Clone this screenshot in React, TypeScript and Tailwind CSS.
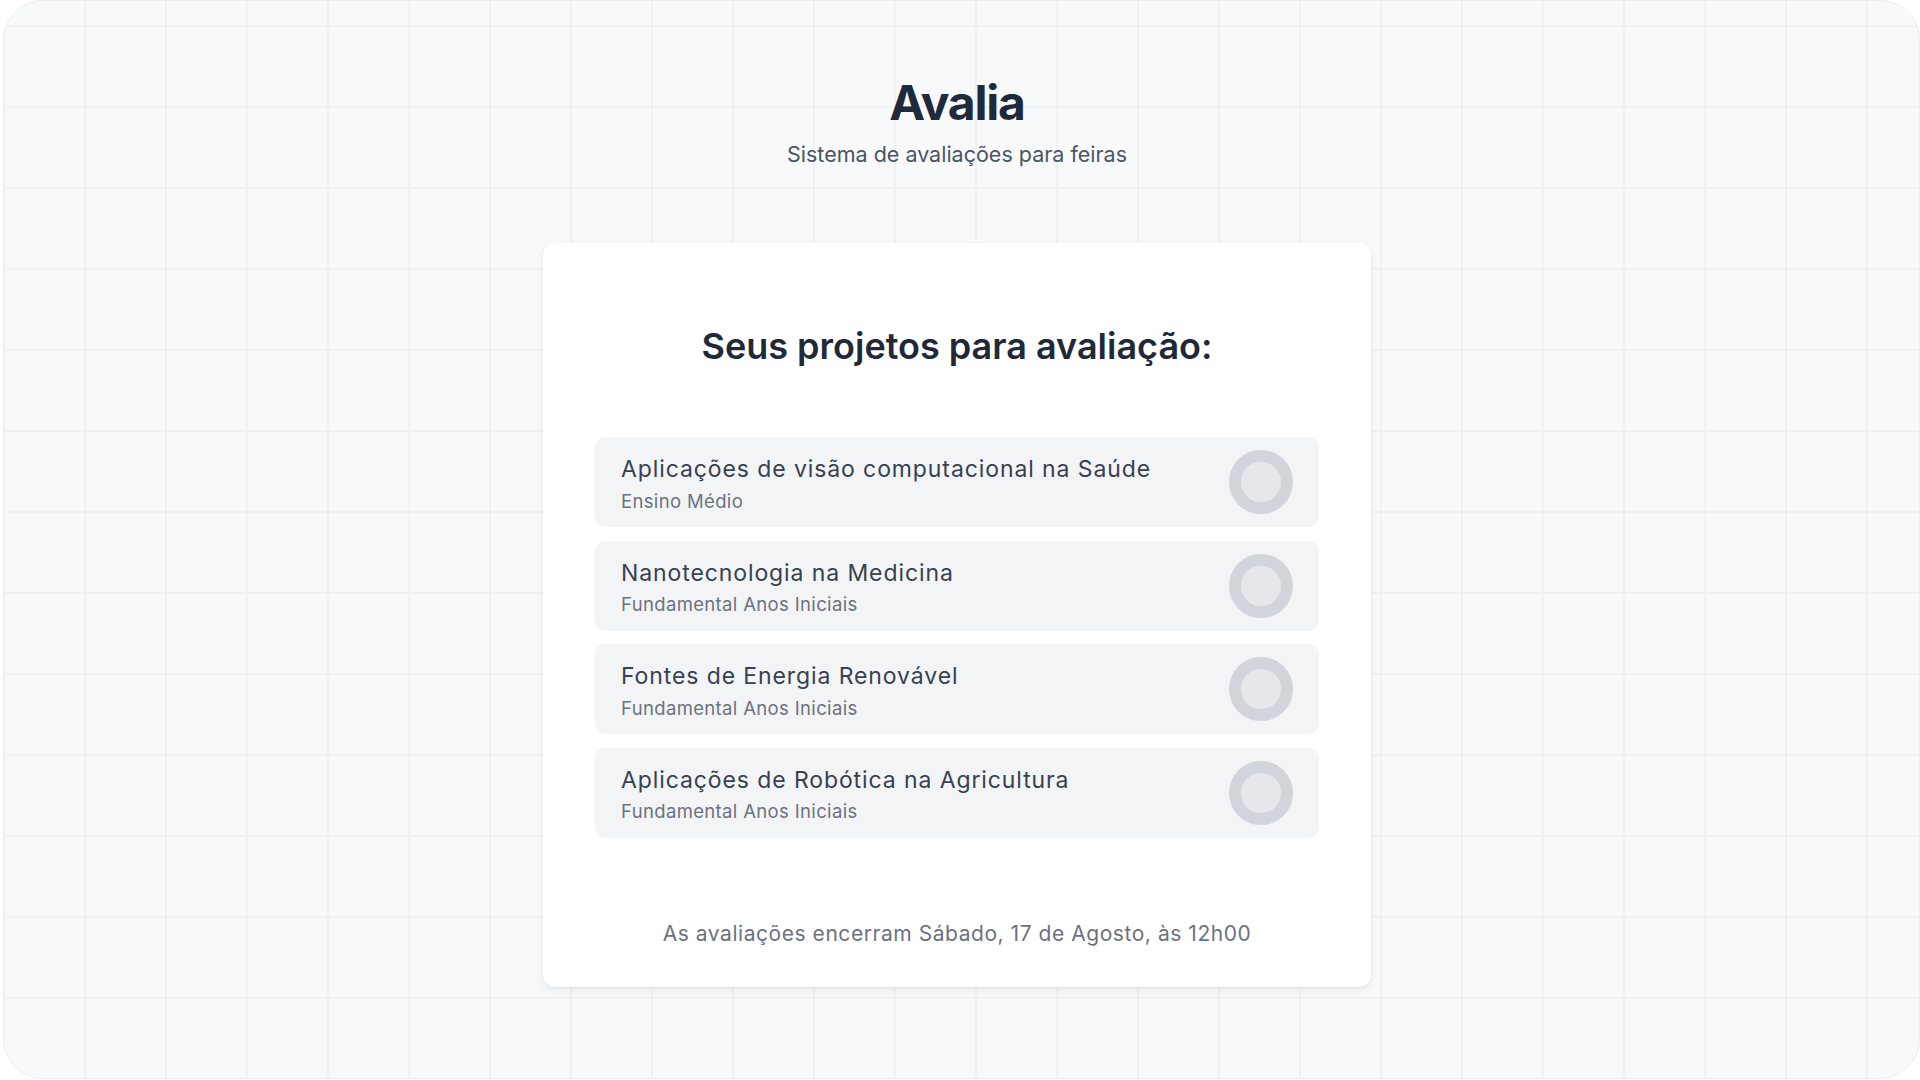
const projetos = [
  { titulo: 'Aplicações de visão computacional na Saúde', nivel: 'Ensino Médio' },
  { titulo: 'Nanotecnologia na Medicina', nivel: 'Fundamental Anos Iniciais' },
  { titulo: 'Fontes de Energia Renovável', nivel: 'Fundamental Anos Iniciais' },
  { titulo: 'Aplicações de Robótica na Agricultura', nivel: 'Fundamental Anos Iniciais' },
]

function ProjetoItem({ titulo, nivel }: { titulo: string; nivel: string }) {
  return (
    <div className="flex h-[90px] items-start justify-between rounded-[10px] bg-[#f3f4f6] pl-[26px] pr-[26px]">
      <div className="flex flex-col pt-[19px]">
        <span className="text-[23px] leading-[27px] tracking-[0.9px] text-[#374151]">{titulo}</span>
        <span className="mt-[6.5px] text-[18.5px] leading-[22px] tracking-[0.35px] text-[#6b7280]">{nivel}</span>
      </div>
      <div className="mt-[13px] h-16 w-16 rounded-full border-[12px] border-[#d1d5db] bg-[#e5e7eb]" />
    </div>
  )
}

export default function App() {
  return (
    <div className="h-[1080px] w-full bg-white font-['Inter',sans-serif]">
      <div className="ml-[3px] flex h-[1079px] flex-col items-center rounded-[40px] border border-[#eceef1] bg-[#f8f9fb] bg-[linear-gradient(to_right,#f0f1f4_2px,transparent_2px),linear-gradient(to_bottom,#f0f1f4_2px,transparent_2px)] bg-[size:81px_81px] bg-[position:-1px_24px] pr-[9px]">
        <h1 className="mt-[78px] text-5xl leading-[48px] font-bold tracking-[-1.2px] text-[#1e293b]">Avalia</h1>
        <p className="mt-[13px] text-[21.5px] leading-7 text-[#4b5563]">Sistema de avaliações para feiras</p>

        <div className="mt-[75px] flex w-[828px] flex-col rounded-xl bg-white px-[52px] pt-[85px] pb-[39px] shadow-[0_4px_10px_rgba(0,0,0,0.06),0_1px_3px_rgba(0,0,0,0.05)]">
          <h2 className="text-center text-4xl leading-[37px] font-semibold text-[#1f2937]">
            Seus projetos para avaliação:
          </h2>
          <div className="mt-[72px] flex flex-col gap-[13.5px]">
            {projetos.map(p => (
              <ProjetoItem key={p.titulo} titulo={p.titulo} nivel={p.nivel} />
            ))}
          </div>
          <p className="mt-[82px] text-center text-[21px] leading-7 tracking-[0.55px] text-[#6b7280]">
            As avaliações encerram Sábado, 17 de Agosto, às 12h00
          </p>
        </div>
      </div>
    </div>
  )
}
